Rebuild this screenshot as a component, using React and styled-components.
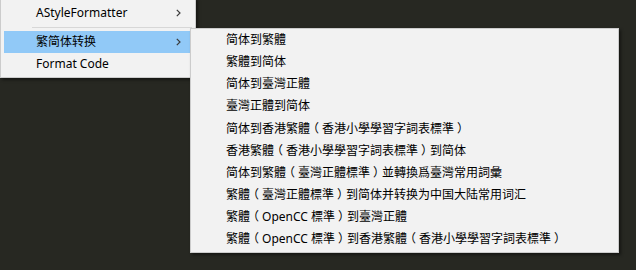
import React from "react";
import styled, { createGlobalStyle } from "styled-components";

const GlobalStyle = createGlobalStyle`
  html, body {
    margin: 0;
    padding: 0;
    background: #272822;
  }
  * {
    box-sizing: border-box;
  }
`;

const mainItems = [
  { label: "AStyleFormatter", sub: true },
  { separator: true },
  { label: "繁简体转换", sub: true, active: true },
  { label: "Format Code" },
];

const convertItems = [
  "简体到繁體",
  "繁體到简体",
  "简体到臺灣正體",
  "臺灣正體到简体",
  "简体到香港繁體（香港小學學習字詞表標準）",
  "香港繁體（香港小學學習字詞表標準）到简体",
  "简体到繁體（臺灣正體標準）並轉換爲臺灣常用詞彙",
  "繁體（臺灣正體標準）到简体并转换为中国大陆常用词汇",
  "繁體（OpenCC 標準）到臺灣正體",
  "繁體（OpenCC 標準）到香港繁體（香港小學學習字詞表標準）",
];

// fullwidth brackets sit centred in the em box on the reference (JhengHei style)
const renderLabel = (text) =>
  text.split(/([（）])/).map((part, i) =>
    part === "（" || part === "）" ? <Paren key={i}>{part}</Paren> : part
  );

const Chevron = () => (
  <svg width="5" height="8" viewBox="0 0 5 8">
    <path d="M0.8 0.8 L4 4 L0.8 7.2" fill="none" stroke="#3a3a3a" strokeWidth="1.2" />
  </svg>
);

const App = () => {
  return (
    <>
      <GlobalStyle />
      <Desktop>
        <Menu $left={0} $top={-2} $width={196}>
          {mainItems.map((item, i) =>
            item.separator ? (
              <Separator key={i} />
            ) : (
              <MenuItem key={i} $active={item.active}>
                <Label>{item.label}</Label>
                {item.sub && (
                  <Arrow>
                    <Chevron />
                  </Arrow>
                )}
              </MenuItem>
            )
          )}
        </Menu>
        <Menu $left={190} $top={28} $width={429} $pad="0 3px 3px">
          {convertItems.map((label) => (
            <MenuItem key={label}>
              <Label>{renderLabel(label)}</Label>
            </MenuItem>
          ))}
        </Menu>
      </Desktop>
    </>
  );
};

const Desktop = styled.div`
  position: relative;
  width: 636px;
  height: 270px;
  overflow: hidden;
  background: #272822;
  font-family: "Noto Sans", "Noto Sans CJK TC", sans-serif;
  font-size: 12px;
  color: #000;
`;

const Menu = styled.div`
  position: absolute;
  left: ${(p) => p.$left}px;
  top: ${(p) => p.$top}px;
  width: ${(p) => p.$width}px;
  padding: ${(p) => p.$pad || "3px 3px 2px"};
  display: flex;
  flex-direction: column;
  background: #f2f2f2;
  border: 1px solid #cccccc;
  box-shadow: 2px 2px 3px rgba(0, 0, 0, 0.45);
`;

const MenuItem = styled.div`
  height: 22px;
  display: flex;
  align-items: center;
  padding-left: 32px;
  padding-right: 8px;
  background: ${(p) => (p.$active ? "#91c9f7" : "transparent")};
`;

const Label = styled.span`
  flex: 1;
  white-space: nowrap;
  line-height: 22px;
`;

const Paren = styled.span`
  font-family: "Noto Sans CJK TC", sans-serif;
  font-feature-settings: "halt" 1;
  padding: 0 3px;
`;

const Arrow = styled.span`
  display: flex;
  align-items: center;
  margin-right: 3px;
`;

const Separator = styled.div`
  height: 7px;
  margin-left: 28px;
  display: flex;
  align-items: center;

  &::after {
    content: "";
    flex: 1;
    height: 1px;
    background: #d7d7d7;
  }
`;

export default App;
